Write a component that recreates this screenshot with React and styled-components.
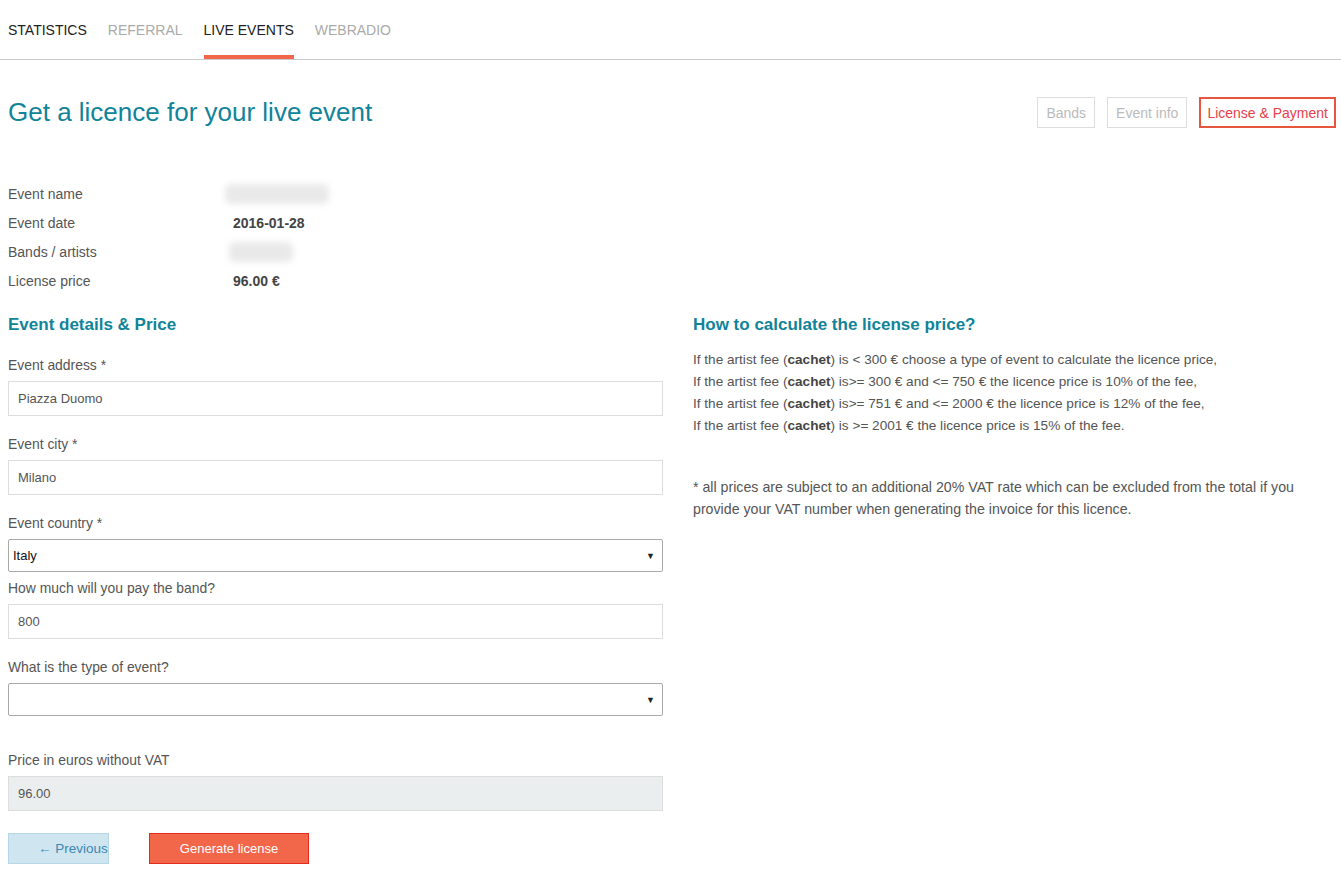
import React from 'react'
import styled, { createGlobalStyle } from 'styled-components'

const Global = createGlobalStyle`
  body {
    margin: 0;
    background: #fff;
    font-family: "Liberation Sans", Arial, sans-serif;
    color: #555;
  }
  * { box-sizing: border-box; }
`

const Nav = styled.div`
  display: flex;
  gap: 21px;
  height: 60px;
  padding: 0 8px;
  border-bottom: 1px solid #ccc;
`

const Tab = styled.div`
  display: flex;
  align-items: center;
  height: 59px;
  padding-top: 4px;
  font-size: 14px;
  text-transform: uppercase;
  color: ${p => (p.$dim ? '#aaa' : '#222')};
  border-bottom: 4px solid ${p => (p.$active ? '#f26649' : 'transparent')};
`

const Page = styled.div`
  padding: 0 5px 0 8px;
`

const Header = styled.div`
  display: flex;
  align-items: center;
  justify-content: space-between;
  height: 31px;
  margin-top: 37px;
`

const Title = styled.h1`
  margin: 0;
  font-size: 26px;
  font-weight: normal;
  color: #108499;
`

const Steps = styled.div`
  display: flex;
  gap: 12px;
`

const Step = styled.div`
  height: 31px;
  padding: 0 ${p => (p.$active ? 6 : 8)}px;
  display: flex;
  align-items: center;
  font-size: 14px;
  color: ${p => (p.$active ? '#e8404a' : '#bbb')};
  border: ${p => (p.$active ? '2px solid #e8553f' : '1px solid #ddd')};
`

const Info = styled.div`
  margin-top: 51px;
  display: grid;
  grid-template-columns: 225px auto;
  grid-auto-rows: 29px;
  align-items: center;
  font-size: 14px;
`

const InfoValue = styled.div`
  font-weight: bold;
  color: #444;
`

const Blur = styled.div`
  width: ${p => p.$w}px;
  height: 20px;
  background: #e9e9e9;
  border-radius: 6px;
  filter: blur(3px);
  margin-left: ${p => p.$shift || 0}px;
`

const Columns = styled.div`
  display: grid;
  grid-template-columns: 655px 1fr;
  gap: 30px;
  margin-top: 20px;
`

const Heading = styled.h2`
  margin: 0 0 ${p => p.$mb || 20}px;
  font-size: 17px;
  line-height: 20px;
  font-weight: bold;
  color: #108499;
`

const Group = styled.div`
  margin-bottom: ${p => p.$mb ?? 18}px;
`

const Label = styled.label`
  display: block;
  font-size: 13.9px;
  line-height: 20px;
  margin-bottom: 6px;
  color: #555;
`

const Input = styled.div`
  height: 35px;
  display: flex;
  align-items: center;
  padding: 0 9px;
  font-size: 13px;
  color: #555;
  border: 1px solid #ddd;
  background: ${p => (p.$disabled ? '#ebeeef' : '#fff')};
`

const Select = styled.div`
  height: 33px;
  display: flex;
  align-items: center;
  justify-content: space-between;
  padding: 0 7px 0 4px;
  font-size: 13px;
  color: #111;
  border: 1px solid #a9a9a9;
  border-radius: 2px;
`

const Arrow = styled.span`
  font-size: 9px;
  color: #222;
`

const Actions = styled.div`
  display: flex;
  gap: 40px;
  margin-top: 22px;
`

const Button = styled.div`
  height: 31px;
  display: flex;
  align-items: center;
  justify-content: ${p => (p.$primary ? 'center' : 'flex-start')};
  padding-left: ${p => (p.$primary ? 0 : 29)}px;
  white-space: nowrap;
  font-size: ${p => (p.$primary ? 13 : 13.5)}px;
  width: ${p => p.$w}px;
  background: ${p => (p.$primary ? '#f26649' : '#cfe6f0')};
  border: 1px solid ${p => (p.$primary ? '#e52b1e' : '#b6d8e6')};
  color: ${p => (p.$primary ? '#fff' : '#3d86b3')};
`

const Text = styled.p`
  margin: 0 0 ${p => p.$mb || 0}px;
  font-size: ${p => p.$size || 13.6}px;
  line-height: 22px;
  color: #555;
  b { color: #444; }
`

export default function App() {
  const rules = [
    'is < 300 € choose a type of event to calculate the licence price,',
    'is>= 300 € and <= 750 € the licence price is 10% of the fee,',
    'is>= 751 € and <= 2000 € the licence price is 12% of the fee,',
    'is >= 2001 € the licence price is 15% of the fee.',
  ]
  return (
    <>
      <Global />
      <Nav>
        <Tab>Statistics</Tab>
        <Tab $dim>Referral</Tab>
        <Tab $active>Live events</Tab>
        <Tab $dim>Webradio</Tab>
      </Nav>
      <Page>
        <Header>
          <Title>Get a licence for your live event</Title>
          <Steps>
            <Step>Bands</Step>
            <Step>Event info</Step>
            <Step $active>License &amp; Payment</Step>
          </Steps>
        </Header>

        <Info>
          <div>Event name</div>
          <Blur $w={104} $shift={-8} />
          <div>Event date</div>
          <InfoValue>2016-01-28</InfoValue>
          <div>Bands / artists</div>
          <Blur $w={64} $shift={-4} />
          <div>License price</div>
          <InfoValue>96.00 €</InfoValue>
        </Info>

        <Columns>
          <div>
            <Heading>Event details &amp; Price</Heading>
            <Group>
              <Label>Event address *</Label>
              <Input>Piazza Duomo</Input>
            </Group>
            <Group>
              <Label>Event city *</Label>
              <Input>Milano</Input>
            </Group>
            <Group $mb={6}>
              <Label>Event country *</Label>
              <Select>Italy<Arrow>▼</Arrow></Select>
            </Group>
            <Group>
              <Label>How much will you pay the band?</Label>
              <Input>800</Input>
            </Group>
            <Group $mb={34}>
              <Label>What is the type of event?</Label>
              <Select><span /><Arrow>▼</Arrow></Select>
            </Group>
            <Group $mb={0}>
              <Label>Price in euros without VAT</Label>
              <Input $disabled>96.00</Input>
            </Group>
            <Actions>
              <Button $w={101}>← Previous</Button>
              <Button $primary $w={160}>Generate license</Button>
            </Actions>
          </div>
          <div>
            <Heading $mb={14}>How to calculate the license price?</Heading>
            <Text $mb={39}>
              {rules.map((r, i) => (
                <React.Fragment key={i}>
                  If the artist fee (<b>cachet</b>) {r}
                  <br />
                </React.Fragment>
              ))}
            </Text>
            <Text $size={14.2}>
              * all prices are subject to an additional 20% VAT rate which can be excluded from the total if you provide your VAT number when generating the invoice for this licence.
            </Text>
          </div>
        </Columns>
      </Page>
    </>
  )
}
